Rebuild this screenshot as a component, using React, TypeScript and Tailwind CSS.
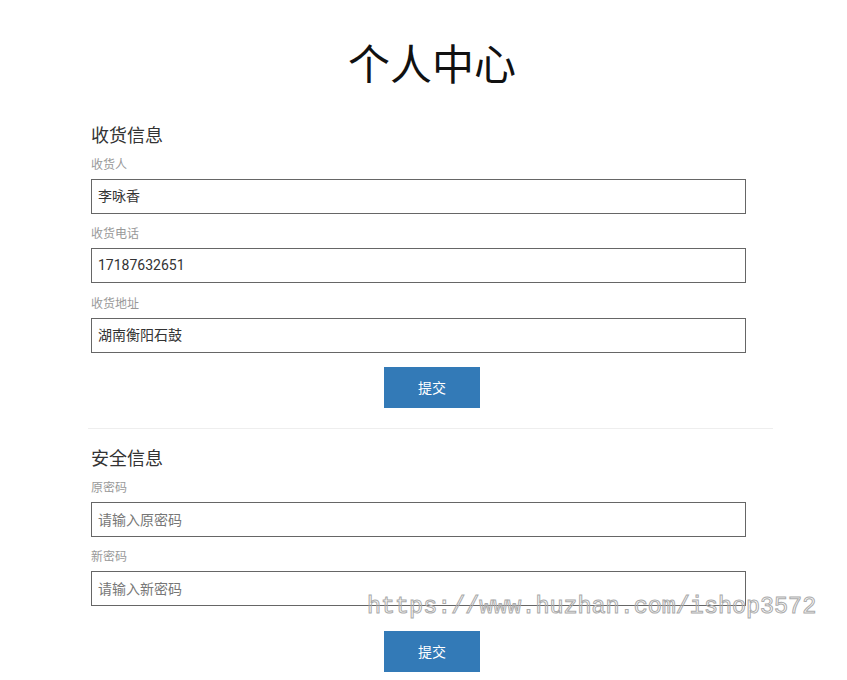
import React from "react";

const font = { fontFamily: '"Noto Sans CJK SC", "Noto Sans", Roboto, sans-serif' };

function Field({ label, value, placeholder, mt }: { label: string; value?: string; placeholder?: string; mt: string }) {
  return (
    <div className={mt}>
      <div className="text-[12px] leading-[17px] text-[#999]">{label}</div>
      <div className="mt-[7px] w-[655px] h-[35px] border border-[#666] flex items-center px-[6px] text-[14px]">
        {value ? (
          <span className="text-[#333]" style={{ fontFamily: 'Roboto, "Noto Sans CJK SC", sans-serif' }}>{value}</span>
        ) : (
          <span className="text-[#777]">{placeholder}</span>
        )}
      </div>
    </div>
  );
}

function Button({ className }: { className: string }) {
  return (
    <div className={"flex justify-center " + className}>
      <div className="w-[96px] h-[41px] bg-[#337ab7] text-white text-[14px] flex items-center justify-center">提交</div>
    </div>
  );
}

export default function App() {
  return (
    <div className="relative w-[847px] h-[680px] bg-white overflow-hidden" style={font}>
      <div className="ml-[91px] w-[682px] pt-[37px]">
        <h1 className="text-center text-[42px] leading-[50px] text-[#111] font-normal">个人中心</h1>
        <div className="mt-[34px] text-[18px] leading-[26px] text-[#333]">收货信息</div>
        <Field mt="mt-[8px]" label="收货人" value="李咏香" />
        <Field mt="mt-[10px]" label="收货电话" value="17187632651" />
        <Field mt="mt-[11px]" label="收货地址" value="湖南衡阳石鼓" />
        <Button className="mt-[14px]" />
        <div className="mt-[20px] -ml-[3px] w-[685px] h-px bg-[#eee]" />
        <div className="mt-[15px] text-[18px] leading-[26px] text-[#333]">安全信息</div>
        <Field mt="mt-[8px]" label="原密码" placeholder="请输入原密码" />
        <Field mt="mt-[10px]" label="新密码" placeholder="请输入新密码" />
        <Button className="mt-[25px]" />
      </div>
      <div
        className="absolute left-[367px] top-[591px] text-[23.4px] leading-[32px] text-transparent [-webkit-text-stroke:1px_#aaa] whitespace-nowrap"
        style={{ fontFamily: '"Liberation Mono", "DejaVu Sans Mono", monospace' }}
      >
        https://www.huzhan.com/ishop3572
      </div>
    </div>
  );
}
